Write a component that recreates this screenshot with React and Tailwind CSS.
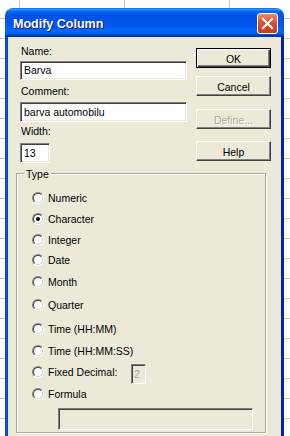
import React from "react";

const font = "font-['Liberation_Sans',Arial,sans-serif]";

function Sunken({ className = "", children }) {
  return (
    <div
      className={
        "border border-t-[#808080] border-l-[#808080] border-b-white border-r-white shadow-[inset_1px_1px_0_#404040,inset_-1px_-1px_0_#ece9d8] " +
        className
      }
    >
      {children}
    </div>
  );
}

function Btn({ children, def, disabled, className = "" }) {
  const base = def
    ? "border border-black shadow-[inset_1px_1px_0_#fff,inset_-1px_-1px_0_#404040,inset_-2px_-2px_0_#808080]"
    : "border border-t-white border-l-white border-b-[#404040] border-r-[#404040] shadow-[inset_-1px_-1px_0_#808080]";
  return (
    <div
      className={
        "h-[20px] w-[75px] flex items-center justify-center bg-[#ece9d8] text-[10.5px] leading-[13px] pt-[2px] " +
        base +
        " " +
        className
      }
    >
      <span
        className={
          disabled
            ? "text-[#aca899] [text-shadow:1px_1px_0_#fff]"
            : "text-black"
        }
      >
        {children}
      </span>
    </div>
  );
}

function Radio({ checked }) {
  return (
    <div className="w-[12px] h-[12px] rounded-full border border-t-[#808080] border-l-[#808080] border-b-white border-r-white shrink-0">
      <div className="w-full h-full rounded-full border border-t-[#404040] border-l-[#404040] border-b-[#d4d0c8] border-r-[#d4d0c8] bg-white flex items-center justify-center">
        {checked && <div className="w-[4px] h-[4px] rounded-full bg-black" />}
      </div>
    </div>
  );
}

const rows = [
  { label: "Numeric", mt: "mt-0" },
  { label: "Character", mt: "mt-[1px]", checked: true },
  { label: "Integer", mt: "mt-[1px]" },
  { label: "Date", mt: "mt-0" },
  { label: "Month", mt: "mt-[2px]" },
  { label: "Quarter", mt: "mt-[3px]" },
  { label: "Time (HH:MM)", mt: "mt-[4px]" },
  { label: "Time (HH:MM:SS)", mt: "mt-[2px]" },
  { label: "Fixed Decimal:", mt: "mt-[1px]", fixed: true },
  { label: "Formula", mt: "mt-[2px]" },
];

export default function App() {
  return (
    <div
      className={
        "relative w-[290px] h-[436px] overflow-hidden bg-white [background-image:linear-gradient(to_right,#c6c6c6_1px,transparent_1px),linear-gradient(to_bottom,#c6c6c6_1px,transparent_1px)] [background-size:105px_20px] [background-position:19px_18px] " +
        font
      }
    >
      <div className="absolute left-[5px] top-[8px] w-[279px] h-[440px] rounded-t-[8px] overflow-hidden flex flex-col">
        {/* Title bar */}
        <div className="h-[29px] shrink-0 flex items-start justify-between pl-[8px] pr-[6px] bg-[linear-gradient(to_bottom,#0058ee_0%,#3593ff_4%,#288eff_6%,#127dff_8%,#036ffc_10%,#0262ee_14%,#0057e5_20%,#0054e3_24%,#0055eb_56%,#005bf5_66%,#026afe_76%,#0062ef_86%,#0052d6_92%,#0040ab_94%,#003092_100%)]">
          <span className="mt-[9px] text-[12.5px] leading-[15px] font-bold text-white [text-shadow:1px_1px_0_#0a1883]">
            Modify Column
          </span>
          <div className="mt-[5px] w-[21px] h-[21px] rounded-[3px] border border-white bg-[linear-gradient(to_bottom,#ef8a6a,#dd4f2d_45%,#c83a1b)] flex items-center justify-center">
            <svg width="13" height="13" viewBox="0 0 13 13">
              <path
                d="M2 2 L11 11 M11 2 L2 11"
                stroke="#fff"
                strokeWidth="2.2"
                strokeLinecap="square"
              />
            </svg>
          </div>
        </div>
        {/* Client */}
        <div className="flex-1 bg-[#ece9d8] border-l-[3px] border-l-[#0b46dc] border-r-[3px] border-r-[#0021ad] text-black text-[10.5px] leading-[13px]">
          <div className="flex pl-[12px] pr-[10px] pt-[8px] gap-[9px]">
            <div className="w-[167px] flex flex-col">
              <span className="ml-[1px]">Name:</span>
              <Sunken className="mt-[3px] h-[19px] bg-white flex items-center pl-[3px]">
                <span>Barva</span>
              </Sunken>
              <span className="mt-[5px] ml-[1px]">Comment:</span>
              <Sunken className="mt-[4px] h-[20px] bg-white flex items-center pl-[3px]">
                <span>barva automobilu</span>
              </Sunken>
              <span className="mt-[3px] ml-[1px]">Width:</span>
              <Sunken className="mt-[5px] h-[20px] w-[30px] bg-white flex items-center pl-[3px]">
                <span>13</span>
              </Sunken>
            </div>
            <div className="flex flex-col">
              <Btn def className="mt-[3px]">OK</Btn>
              <Btn className="mt-[8px]">Cancel</Btn>
              <Btn disabled className="mt-[13px]">Define...</Btn>
              <Btn className="mt-[12px]">Help</Btn>
            </div>
          </div>
          {/* Group */}
          <div className="relative mt-[10px] ml-[8px] w-[250px] h-[260px] border border-[#aca899] shadow-[1px_1px_0_#fff,inset_1px_1px_0_#fff]">
            <span className="absolute left-[7px] -top-[6px] px-[2px] bg-[#ece9d8]">Type</span>
            <div className="flex flex-col pl-[15px] pt-[14px]">
              {rows.map((r) => (
                <div key={r.label} className={"h-[20px] flex items-center gap-[4px] " + r.mt}>
                  <Radio checked={r.checked} />
                  {r.fixed ? (
                    <>
                      <span className="w-[79px]">{r.label}</span>
                      <Sunken className="self-start mt-[2px] w-[15px] h-[20px] flex items-center pl-[2px] text-[#aca899] text-[11px]">
                        <span>2</span>
                      </Sunken>
                    </>
                  ) : (
                    <span>{r.label}</span>
                  )}
                </div>
              ))}
              <Sunken className="mt-[4px] ml-[26px] w-[195px] h-[22px]" />
            </div>
          </div>
        </div>
      </div>
    </div>
  );
}
